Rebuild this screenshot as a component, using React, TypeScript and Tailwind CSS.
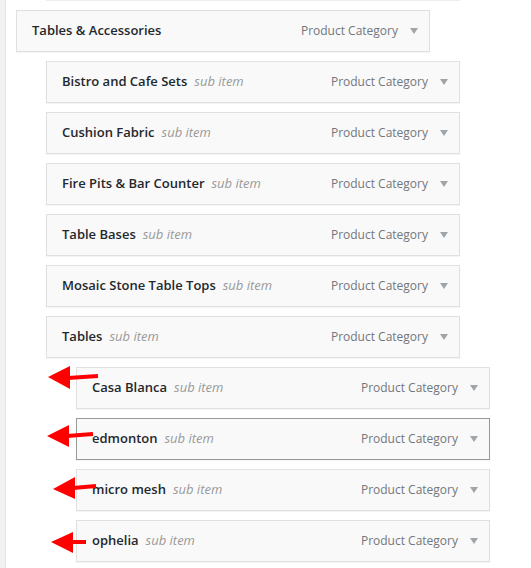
import React from "react";

type Item = { title: string; sub?: boolean; level: number; active?: boolean };

const items: Item[] = [
  { title: "Tables & Accessories", level: 0 },
  { title: "Bistro and Cafe Sets", sub: true, level: 1 },
  { title: "Cushion Fabric", sub: true, level: 1 },
  { title: "Fire Pits & Bar Counter", sub: true, level: 1 },
  { title: "Table Bases", sub: true, level: 1 },
  { title: "Mosaic Stone Table Tops", sub: true, level: 1 },
  { title: "Tables", sub: true, level: 1 },
  { title: "Casa Blanca", sub: true, level: 2 },
  { title: "edmonton", sub: true, level: 2, active: true },
  { title: "micro mesh", sub: true, level: 2 },
  { title: "ophelia", sub: true, level: 2 },
];

function Row({ item }: { item: Item }) {
  const indent =
    item.level === 0 ? "ml-0" : item.level === 1 ? "ml-[30px]" : "ml-[60px]";
  const border = item.active ? "border-[#999999]" : "border-[#e0e0e0]";
  return (
    <div
      className={`${indent} ${border} mt-[9px] flex h-[42px] w-[414px] items-center justify-between border bg-[#f9f9f9] pl-[15px] pr-[11px] text-[13px] shadow-[0_1px_1px_rgba(0,0,0,0.04)]`}
    >
      <div className="flex items-center">
        <span className="font-semibold text-[#23282d]">{item.title}</span>
        {item.sub && (
          <span className="ml-[7px] italic text-[#999999]">sub item</span>
        )}
      </div>
      <div className="flex items-center">
        <span className="text-[12px] text-[#72777c]">Product Category</span>
        <svg width="8" height="6" viewBox="0 0 8 6" className="ml-[12px]">
          <polygon points="0,0 8,0 4,6" fill="#a0a5aa" />
        </svg>
      </div>
    </div>
  );
}

export default function App() {
  return (
    <div
      className="relative flex h-[568px] w-[531px] overflow-hidden bg-white"
      style={{ fontFamily: '"Open Sans", "Noto Sans", sans-serif' }}
    >
      <div className="h-full w-[6px] shrink-0 border-r border-[#e5e5e5] bg-[#f1f1f1]" />
      <div className="flex flex-col pl-[10px]">
        <div className="ml-[30px] h-[1px] w-[414px] border-x border-b border-[#eeeeee] bg-[#f9f9f9]" />
        <div>
          {items.map((it, i) => (
            <Row key={i} item={it} />
          ))}
        </div>
      </div>
      <svg
        className="pointer-events-none absolute left-0 top-0"
        width="531"
        height="568"
        viewBox="0 0 531 568"
      >
        <g fill="#ff0000" stroke="#ff0000">
          <polygon points="48,377 70,366 70,389" stroke="none" />
          <line x1="68" y1="378" x2="98" y2="376" strokeWidth="4" />
          <polygon points="47,436 69,425 69,447" stroke="none" />
          <line x1="67" y1="436" x2="93" y2="434" strokeWidth="4" />
          <polygon points="53,489 75,477 75,499" stroke="none" />
          <line x1="73" y1="488" x2="96" y2="486" strokeWidth="4" />
          <polygon points="51,542 73,532 73,553" stroke="none" />
          <line x1="71" y1="542" x2="86" y2="542" strokeWidth="4" />
        </g>
      </svg>
    </div>
  );
}
